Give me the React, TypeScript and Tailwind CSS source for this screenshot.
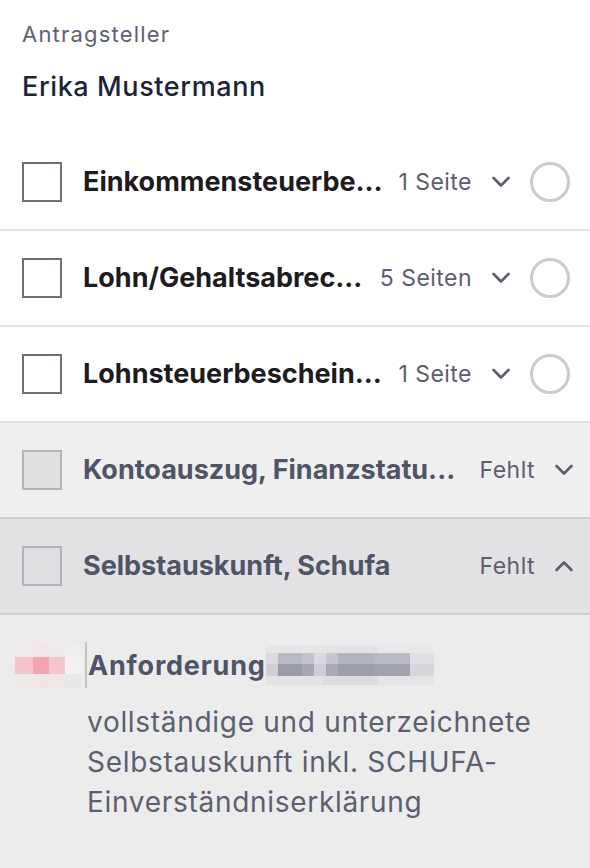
import React from 'react';

type Doc = {
  title: string;
  meta: string;
  missing?: boolean;
  open?: boolean;
};

const docs: Doc[] = [
  { title: 'Einkommensteuerbe...', meta: '1 Seite' },
  { title: 'Lohn/Gehaltsabrec...', meta: '5 Seiten' },
  { title: 'Lohnsteuerbeschein...', meta: '1 Seite' },
  { title: 'Kontoauszug, Finanzstatu...', meta: 'Fehlt', missing: true },
  { title: 'Selbstauskunft, Schufa', meta: 'Fehlt', missing: true, open: true },
];

function Chevron({ up }: { up?: boolean }) {
  return (
    <svg width="20" height="12" viewBox="0 0 20 12" fill="none" className="shrink-0">
      <path
        d={up ? 'M2.5 10L10 2.5L17.5 10' : 'M2.5 2L10 9.5L17.5 2'}
        stroke="#5b6070"
        strokeWidth="2.6"
        strokeLinecap="round"
        strokeLinejoin="round"
      />
    </svg>
  );
}

function DocRow({ doc }: { doc: Doc }) {
  const rowBg = doc.open ? 'bg-[#e2e2e5]' : doc.missing ? 'bg-[#efeff0]' : 'bg-white';
  const border = doc.missing ? 'border-[#cfcfd4]' : 'border-[#e2e2e4]';
  return (
    <div className={`flex items-center h-[96px] border-b-2 ${border} ${rowBg} pl-[22px] ${doc.missing ? 'pr-[16px]' : 'pr-[20px]'}`}>
      <div
        className={`w-[40px] h-[40px] shrink-0 border-2 ${doc.missing ? 'border-[#b3b3b8] bg-[#e0e0e3]' : 'border-[#6e6e7a] bg-white'}`}
      />
      <div
        className={`ml-[21px] flex-1 min-w-0 whitespace-nowrap overflow-hidden text-[27px] font-bold ${doc.missing ? 'text-[#4f5467]' : 'text-[#1c1c20]'}`}
      >
        {doc.title}
      </div>
      <span className="ml-[10px] shrink-0 text-[23px] tracking-[0.02em] text-[#5b6070]">{doc.meta}</span>
      <div className="ml-[19px]">
        <Chevron up={doc.open} />
      </div>
      {!doc.missing && (
        <div className="ml-[19px] w-[40px] h-[40px] shrink-0 rounded-full border-[3px] border-[#cacad1]" />
      )}
    </div>
  );
}

export default function App() {
  return (
    <div className="w-[590px] h-[868px] overflow-hidden bg-white font-['Inter',sans-serif] [font-optical-sizing:none]">
      <div className="px-[22px] pt-[20px]">
        <div className="text-[22px] leading-[28px] tracking-[1.2px] text-[#5d6275]">Antragsteller</div>
        <div className="mt-[24px] text-[27px] leading-[30px] tracking-[0.6px] font-medium text-[#1c2438]">Erika Mustermann</div>
      </div>

      <div className="mt-[31px] border-t-2 border-transparent">
        {docs.map((d, i) => (
          <DocRow key={i} doc={d} />
        ))}
      </div>

      <div className="bg-[#ececed] h-[300px] pt-[27px]">
        <div className="flex items-center pl-[15px]">
          {/* pixelated / blurred avatar */}
          <div className="flex flex-col w-[67px] shrink-0">
            <div className="flex h-[14px]">
              <div className="w-[18px] bg-[#efebec]" />
              <div className="w-[16px] bg-[#f1e6e8]" />
              <div className="w-[16px] bg-[#f0e9ea]" />
              <div className="w-[17px] bg-[#eeeeee]" />
            </div>
            <div className="flex h-[17px]">
              <div className="w-[18px] bg-[#f4c4cb]" />
              <div className="w-[16px] bg-[#f5a3b0]" />
              <div className="w-[16px] bg-[#f4c6cd]" />
              <div className="w-[17px] bg-[#f3f1f1]" />
            </div>
            <div className="flex h-[14px]">
              <div className="w-[18px] bg-[#efe9ea]" />
              <div className="w-[16px] bg-[#f1e5e7]" />
              <div className="w-[16px] bg-[#efe8e9]" />
              <div className="w-[17px] bg-[#e9e9ea]" />
            </div>
          </div>
          <div className="w-[2px] h-[46px] ml-[3px] bg-[#c4c4c8]" />
          <span className="ml-[1px] text-[27px] tracking-[0.8px] font-bold text-[#4f5467] leading-none">Anforderung</span>
          {/* pixelated redaction */}
          <div className="flex flex-col w-[168px]">
            <div className="flex h-[8px]">
              <div className="flex-1 bg-[#e6e6e9]" />
              <div className="flex-1 bg-[#e3e3e6]" />
              <div className="flex-1 bg-[#e8e8ea]" />
            </div>
            <div className="flex h-[11px]">
              <div className="w-[12px] bg-[#dcdce0]" />
              <div className="w-[24px] bg-[#babbc2]" />
              <div className="w-[12px] bg-[#c3c4ca]" />
              <div className="w-[12px] bg-[#dadadf]" />
              <div className="w-[12px] bg-[#c6c7cd]" />
              <div className="w-[36px] bg-[#b3b4bc]" />
              <div className="w-[36px] bg-[#babbc2]" />
              <div className="w-[24px] bg-[#e0e0e4]" />
            </div>
            <div className="flex h-[12px]">
              <div className="w-[12px] bg-[#d0d0d5]" />
              <div className="w-[24px] bg-[#9a9ca7]" />
              <div className="w-[12px] bg-[#a6a8b2]" />
              <div className="w-[12px] bg-[#cfcfd5]" />
              <div className="w-[12px] bg-[#a9abb4]" />
              <div className="w-[36px] bg-[#9c9ea9]" />
              <div className="w-[36px] bg-[#a1a3ad]" />
              <div className="w-[24px] bg-[#d6d6db]" />
            </div>
            <div className="flex h-[9px]">
              <div className="flex-1 bg-[#e3e3e6]" />
              <div className="flex-1 bg-[#dddde1]" />
              <div className="flex-1 bg-[#e5e5e8]" />
            </div>
          </div>
        </div>
        <p className="mt-[14px] pl-[87px] pr-[24px] text-[28px] leading-[40px] tracking-[0.7px] text-[#5b6070]">
          vollständige und unterzeichnete Selbstauskunft inkl. SCHUFA-Einverständniserklärung
        </p>
      </div>
    </div>
  );
}
